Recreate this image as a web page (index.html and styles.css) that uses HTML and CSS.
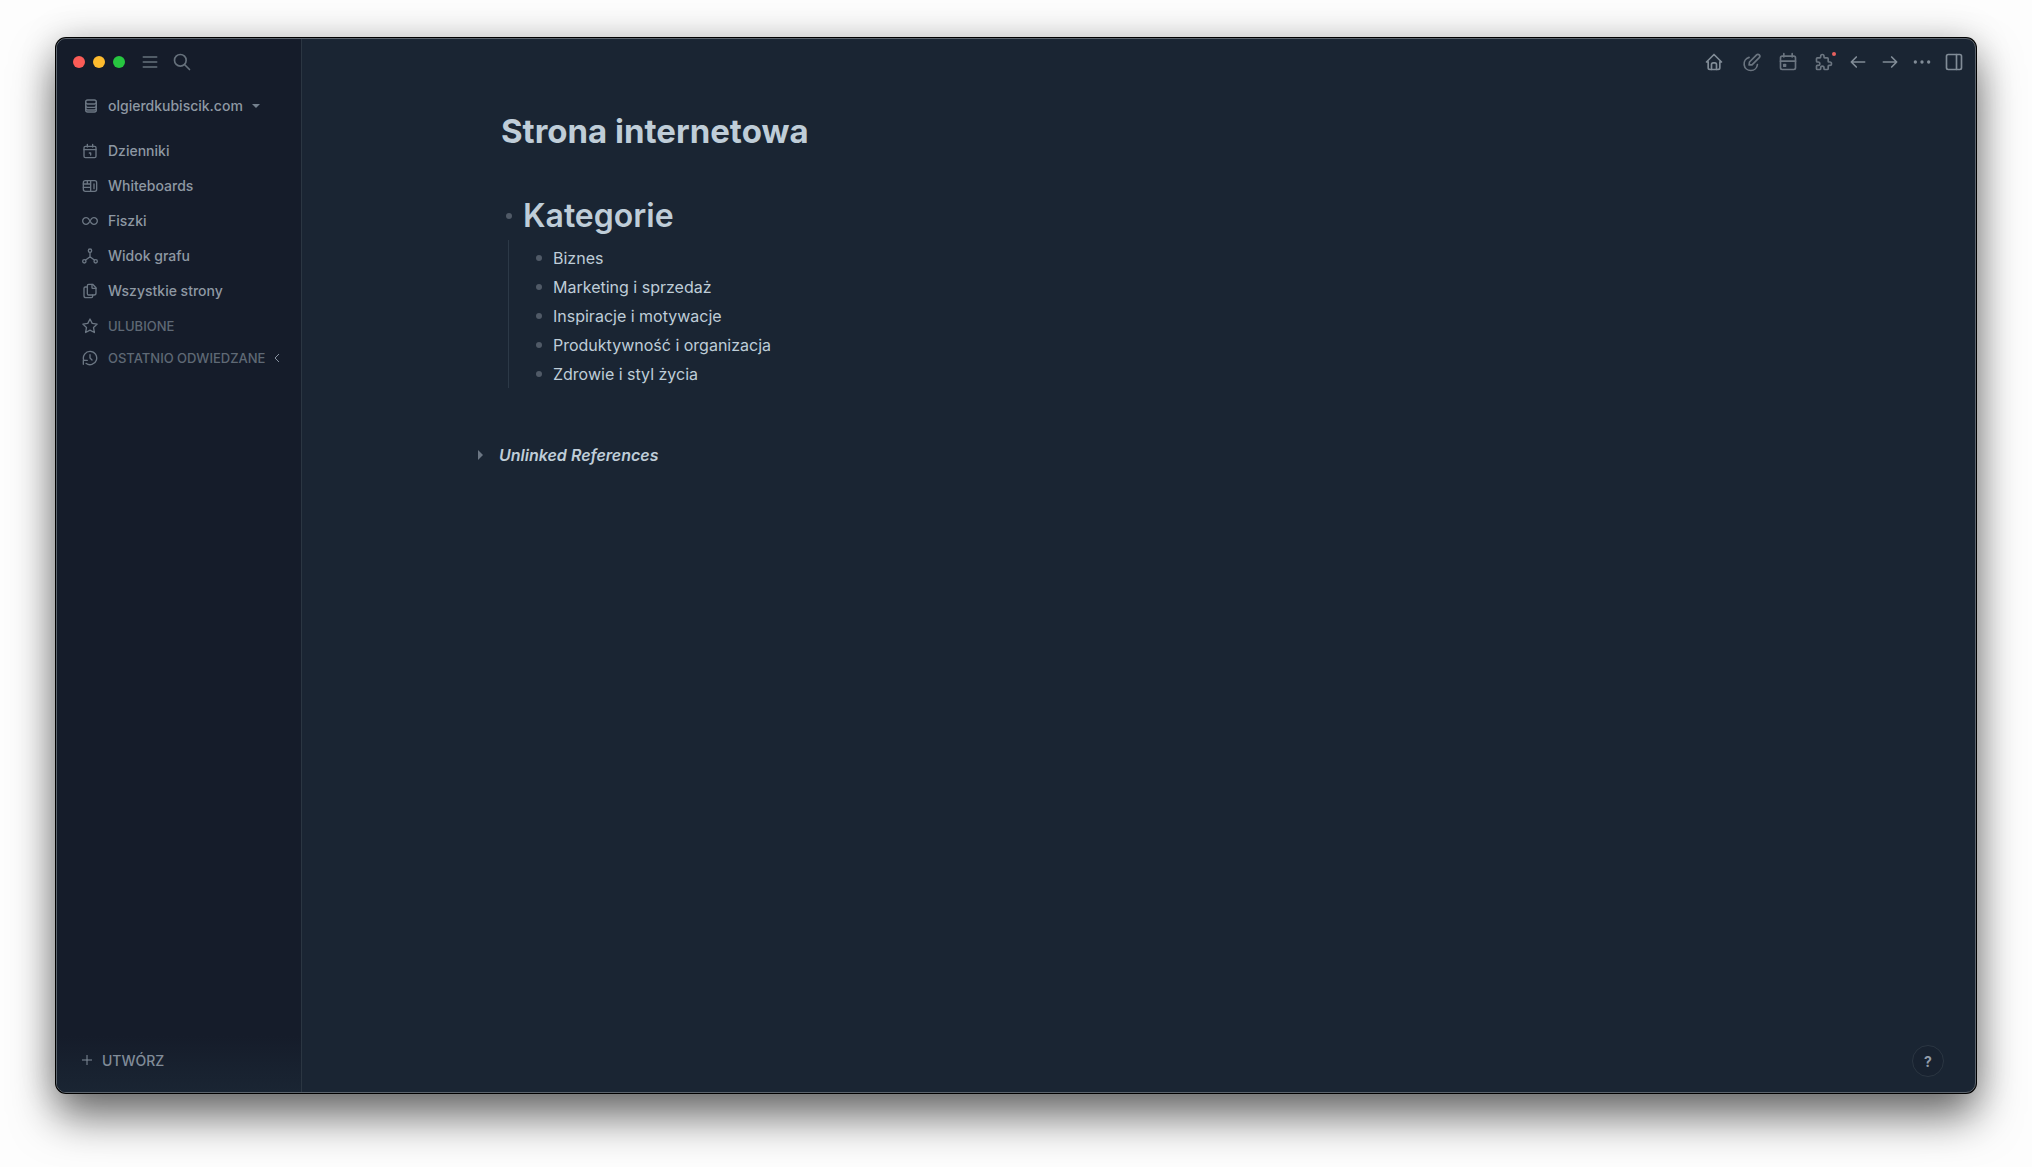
FILE: index.html
```html
<!DOCTYPE html>
<html lang="pl">

<head>
    <meta charset="UTF-8">
    <meta name="viewport" content="width=device-width, initial-scale=1.0">
    <link rel="stylesheet" href="styles.css">
    <title>Strona internetowa</title>
</head>

<body>
    <div class="window">
        <aside class="sidebar">
            <div class="titlebar">
                <span class="light red"></span>
                <span class="light yellow"></span>
                <span class="light green"></span>
                <button class="icon-btn menu-btn" aria-label="Menu">
                    <svg class="icon" viewBox="0 0 24 24"><path d="M4 6h16M4 12h16M4 18h16"/></svg>
                </button>
                <button class="icon-btn" aria-label="Szukaj">
                    <svg class="icon" viewBox="0 0 24 24"><circle cx="10" cy="10" r="7"/><path d="M21 21l-6-6"/></svg>
                </button>
            </div>

            <button class="side-row repo">
                <svg class="icon small" viewBox="0 0 24 24"><rect x="4" y="3" width="16" height="6" rx="3"/><path d="M4 6v12a3 3 0 0 0 3 3h10a3 3 0 0 0 3-3V6"/><path d="M4 11a3 3 0 0 0 3 3h10a3 3 0 0 0 3-3M4 15a3 3 0 0 0 3 3h10a3 3 0 0 0 3-3"/></svg>
                <span>olgierdkubiscik.com</span>
                <span class="caret"></span>
            </button>

            <nav class="nav">
                <a class="side-row" href="#">
                    <svg class="icon small" viewBox="0 0 24 24"><rect x="3" y="5" width="18" height="17" rx="2"/><path d="M8 2v4M16 2v4M3 10h18M11 15h2v3"/></svg>
                    <span>Dzienniki</span>
                </a>
                <a class="side-row" href="#">
                    <svg class="icon small" viewBox="0 0 24 24"><rect x="2" y="4" width="20" height="16" rx="3"/><path d="M8 4v5H2M8 9h5V4M2 14h11v6M13 14V9M18 9v7"/></svg>
                    <span>Whiteboards</span>
                </a>
                <a class="side-row" href="#">
                    <svg class="icon small" viewBox="0 0 24 24"><path d="M10 9a5 5 0 1 0 0 6l4-6a5 5 0 1 1 0 6z"/></svg>
                    <span>Fiszki</span>
                </a>
                <a class="side-row" href="#">
                    <svg class="icon small" viewBox="0 0 24 24"><circle cx="12" cy="4" r="2.500"/><circle cx="3.500" cy="20" r="2.500"/><circle cx="20.500" cy="20" r="2.500"/><path d="M12 6.500V13M5.500 18L12 13l6.500 5"/></svg>
                    <span>Widok grafu</span>
                </a>
                <a class="side-row" href="#">
                    <svg class="icon small" viewBox="0 0 24 24"><path d="M15 2v5a1 1 0 0 0 1 1h5"/><path d="M18 18H10a2 2 0 0 1-2-2V4a2 2 0 0 1 2-2h6l5 5v8a3 3 0 0 1-3 3z"/><path d="M16 18v2a2 2 0 0 1-2 2H6a3 3 0 0 1-3-3V8a2 2 0 0 1 2-2h3"/></svg>
                    <span>Wszystkie strony</span>
                </a>
            </nav>

            <button class="side-row section">
                <svg class="icon small" viewBox="0 0 24 24"><path d="M12 18.300l-6.600 3.500 1.300-7.400-5.400-5.200 7.400-1.100L12 1.500l3.300 6.600 7.400 1.100-5.400 5.200 1.300 7.400z"/></svg>
                <span>ULUBIONE</span>
            </button>
            <button class="side-row section">
                <svg class="icon small" viewBox="0 0 24 24"><path d="M12 7v5l3 3"/><path d="M2.500 15a10 10 0 1 1 3.500 5"/><path d="M2 21.500V15.500h6"/></svg>
                <span>OSTATNIO ODWIEDZANE</span>
                <svg class="chevron" viewBox="0 0 8 12"><path d="M6 2L2 6l4 4"/></svg>
            </button>

            <footer class="create">
                <button class="create-btn">
                    <svg class="plus" viewBox="0 0 10 10"><path d="M5 0v10M0 5h10"/></svg>
                    <span>UTWÓRZ</span>
                </button>
            </footer>
        </aside>

        <main class="main">
            <header class="toolbar">
                <button class="icon-btn home" aria-label="Strona główna">
                    <svg class="icon" viewBox="0 0 24 24"><path d="M5 12H3l9-9 9 9h-2"/><path d="M5 12v7a2 2 0 0 0 2 2h10a2 2 0 0 0 2-2v-7"/><path d="M9 21v-6a2 2 0 0 1 2-2h2a2 2 0 0 1 2 2v6"/></svg>
                </button>
                <button class="icon-btn wide dim" aria-label="Rysuj">
                    <svg class="icon" viewBox="0 0 24 24"><path d="M8.500 6.500A8 8 0 1 0 18.500 15"/><path d="M9 12l8.500-8.500a2.200 2.200 0 0 1 3.200 3.200L12 15.500H8.500z"/></svg>
                </button>
                <button class="icon-btn wide dim" aria-label="Kalendarz">
                    <svg class="icon" viewBox="0 0 24 24"><rect x="3" y="5" width="18" height="16" rx="2"/><path d="M7 2v4M17 2v4M3 11h18"/><rect x="7" y="15" width="2" height="2"/></svg>
                </button>
                <button class="icon-btn wide dim" aria-label="Wtyczki">
                    <svg class="icon" viewBox="0 0 24 24"><path d="M4 7h3a1 1 0 0 0 1-1V5a2 2 0 0 1 4 0v1a1 1 0 0 0 1 1h3a1 1 0 0 1 1 1v3a1 1 0 0 0 1 1h1a2 2 0 0 1 0 4h-1a1 1 0 0 0-1 1v3a1 1 0 0 1-1 1h-3a1 1 0 0 1-1-1v-1a2 2 0 0 0-4 0v1a1 1 0 0 1-1 1H4a1 1 0 0 1-1-1v-3a1 1 0 0 1 1-1h1a2 2 0 0 0 0-4H4a1 1 0 0 1-1-1V8a1 1 0 0 1 1-1z"/></svg>
                    <span class="badge"></span>
                </button>
                <button class="icon-btn" aria-label="Wstecz">
                    <svg class="icon" viewBox="0 0 24 24"><path d="M4 12h16M4 12l6-6M4 12l6 6"/></svg>
                </button>
                <button class="icon-btn" aria-label="Dalej">
                    <svg class="icon" viewBox="0 0 24 24"><path d="M4 12h16M14 6l6 6M14 18l6-6"/></svg>
                </button>
                <button class="icon-btn" aria-label="Więcej">
                    <svg class="icon dots" viewBox="0 0 24 24"><circle cx="4" cy="12" r="2"/><circle cx="12" cy="12" r="2"/><circle cx="20" cy="12" r="2"/></svg>
                </button>
                <button class="icon-btn" aria-label="Prawy panel">
                    <svg class="icon" viewBox="0 0 24 24"><rect x="3" y="3" width="18" height="18" rx="2"/><path d="M15 3v18"/></svg>
                </button>
            </header>

            <article class="page">
                <h1 class="page-title">Strona internetowa</h1>
                <div class="block">
                    <span class="bullet"></span>
                    <h2 class="block-heading">Kategorie</h2>
                </div>
                <ul class="children">
                    <li class="block"><span class="bullet"></span>Biznes</li>
                    <li class="block"><span class="bullet"></span>Marketing i sprzedaż</li>
                    <li class="block"><span class="bullet"></span>Inspiracje i motywacje</li>
                    <li class="block"><span class="bullet"></span>Produktywność i organizacja</li>
                    <li class="block"><span class="bullet"></span>Zdrowie i styl życia</li>
                </ul>
                <button class="references">
                    <span class="triangle"></span>
                    <span>Unlinked References</span>
                </button>
            </article>

            <footer class="help-bar">
                <button class="help-btn">?</button>
            </footer>
        </main>
    </div>
</body>

</html>
```
FILE: styles.css
```css
* {
    box-sizing: border-box;
}

body {
    margin: 0;
    min-height: 100vh;
    padding: 38px 56px 74px;
    display: flex;
    background-color: #fdfdfd;
    font-family: Inter, "Noto Sans", sans-serif;
    color: #bfcdd8;
}

button {
    padding: 0;
    border: none;
    background: none;
    color: inherit;
    font: inherit;
    cursor: pointer;
}

a {
    color: inherit;
    text-decoration: none;
}

.window {
    flex: 1;
    display: flex;
    overflow: hidden;
    border: 1px solid #5c646d;
    border-radius: 10px;
    background-color: #1a2533;
    box-shadow: 0 0 0 1px #000, 0 24px 44px rgba(0, 0, 0, 0.55), 0 0 36px rgba(0, 0, 0, 0.18);
}

/* Icons */
.icon {
    width: 20px;
    height: 20px;
    fill: none;
    stroke: currentColor;
    stroke-width: 2;
    stroke-linecap: round;
    stroke-linejoin: round;
}

.icon.small {
    width: 16px;
    height: 16px;
    flex: none;
    color: #6b7683;
}

.icon.dots {
    fill: currentColor;
    stroke: none;
}

.icon-btn {
    position: relative;
    width: 32px;
    height: 32px;
    display: flex;
    align-items: center;
    justify-content: center;
    color: #818c97;
}

.icon-btn.wide {
    width: 36px;
}

.icon-btn.home {
    width: 40px;
}

.icon-btn.dim {
    color: #6b7580;
}

.badge {
    position: absolute;
    top: 6px;
    right: 6px;
    width: 4px;
    height: 4px;
    border-radius: 50%;
    background-color: #e8615f;
}

/* Sidebar */
.sidebar {
    width: 245px;
    flex: none;
    display: flex;
    flex-direction: column;
    border-right: 1px solid #2b3642;
    background-color: #151c2a;
    color: #8e98a3;
    font-size: 14px;
    font-weight: 500;
}

.titlebar {
    display: flex;
    align-items: center;
    gap: 8px;
    height: 46px;
    padding-left: 16px;
}

.titlebar .icon-btn {
    color: #66717c;
}

.menu-btn {
    margin: 0 -8px 0 1px;
}

.light {
    width: 12px;
    height: 12px;
    border-radius: 50%;
}

.red {
    background-color: #fb5c57;
}

.yellow {
    background-color: #febb2e;
}

.green {
    background-color: #27c640;
}

.side-row {
    display: flex;
    align-items: center;
    gap: 10px;
    height: 35px;
    padding-left: 25px;
}

.repo {
    gap: 9px;
    margin: 3px 0 10px;
    padding-left: 26px;
}

.caret {
    border: 4px solid transparent;
    border-top-color: #74808d;
    border-bottom: none;
}

.section {
    height: 32px;
    color: #5f6975;
    font-size: 13px;
}

.section .chevron {
    margin-left: -2px;
}

.nav {
    margin-bottom: 2px;
}

.chevron {
    width: 8px;
    height: 12px;
    fill: none;
    stroke: #8792a0;
    stroke-width: 1;
}

.create {
    margin-top: auto;
    padding: 12px 25px 20px;
    background: linear-gradient(#151c2a, #1a2533);
}

.create-btn {
    display: flex;
    align-items: center;
    gap: 10px;
    height: 24px;
    color: #818c99;
}

.plus {
    width: 10px;
    height: 10px;
    stroke: currentColor;
    stroke-width: 1;
}

/* Main area */
.main {
    flex: 1;
    display: flex;
    flex-direction: column;
}

.toolbar {
    display: flex;
    align-items: center;
    justify-content: flex-end;
    height: 46px;
    padding-right: 5px;
}

.page {
    padding: 26px 199px 0;
    font-size: 16px;
}

.page-title {
    margin: 0 0 41px;
    font-size: 33px;
    line-height: 40px;
    font-weight: 700;
}

.block {
    display: flex;
    align-items: center;
}

.bullet {
    width: 6px;
    height: 6px;
    margin: 0 11px 0 5px;
    border-radius: 50%;
    background-color: #505a67;
}

.block-heading {
    margin: 0;
    font-size: 32px;
    line-height: 48px;
    font-weight: 600;
}

.children {
    margin: 0 0 0 7px;
    padding: 3px 0 0 22px;
    border-left: 1px solid #2c3947;
    list-style: none;
}

.children .block {
    height: 29px;
}

.references {
    display: flex;
    align-items: center;
    gap: 16px;
    margin: 55px 0 0 -23px;
    line-height: 24px;
    font-style: italic;
    font-weight: 600;
}

.triangle {
    border: 5px solid transparent;
    border-left-color: #6b7683;
    border-right: none;
}

.help-bar {
    display: flex;
    justify-content: flex-end;
    margin-top: auto;
    padding: 0 31px 15px;
}

.help-btn {
    width: 32px;
    height: 32px;
    border: 1px solid #2b3642;
    border-radius: 50%;
    background-color: #182230;
    color: #929dab;
    font-size: 14px;
    font-weight: 700;
}
```
